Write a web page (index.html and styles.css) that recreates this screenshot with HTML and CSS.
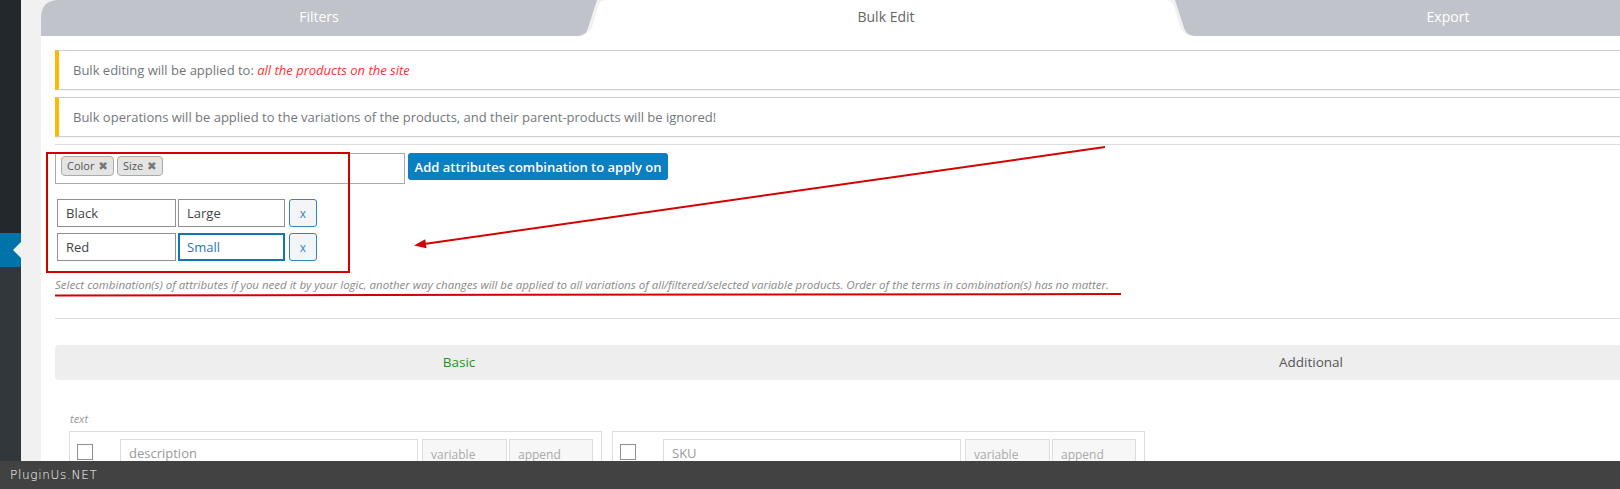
FILE: index.html
```html
<!DOCTYPE html>
<html lang="en">
<head>
  <meta charset="UTF-8">
  <meta name="viewport" content="width=device-width, initial-scale=1.0">
  <title>Bulk Edit</title>
  <link rel="stylesheet" href="styles.css">
</head>
<body>
  <div class="admin">
    <div class="adminmenu">
      <div class="menu-top"></div>
      <div class="menu-current"></div>
      <div class="menu-rest"></div>
    </div>

    <div class="content">
      <div class="tabs">
        <div class="tab tab-filters">Filters</div>
        <div class="tab tab-active">Bulk Edit</div>
        <div class="tab tab-export">Export</div>
      </div>

      <div class="panel">
        <div class="notice">Bulk editing will be applied to: <em class="red">all the products on the site</em></div>
        <div class="notice">Bulk operations will be applied to the variations of the products, and their parent-products will be ignored!</div>
        <div class="sep"></div>

        <div class="attr-row">
          <div class="tag-box">
            <span class="tag">Color <b>✖</b></span>
            <span class="tag">Size <b>✖</b></span>
          </div>
          <button class="btn-add">Add attributes combination to apply on</button>
        </div>

        <div class="combos">
          <div class="combo">
            <input class="term term-1" value="Black">
            <input class="term term-2" value="Large">
            <button class="btn-x">x</button>
          </div>
          <div class="combo">
            <input class="term term-1" value="Red">
            <input class="term term-2 focused" value="Small">
            <button class="btn-x">x</button>
          </div>
        </div>

        <p class="hint">Select combination(s) of attributes if you need it by your logic, another way changes will be applied to all variations of all/filtered/selected variable products. Order of the terms in combination(s) has no matter.</p>
        <div class="sep sep-2"></div>

        <div class="subtabs">
          <div class="subtab active">Basic</div>
          <div class="subtab">Additional</div>
        </div>

        <div class="group-label">text</div>
        <div class="fields">
          <div class="field">
            <span class="check"></span>
            <div class="field-input">description</div>
            <div class="field-sel sel-1">variable</div>
            <div class="field-sel sel-2">append</div>
          </div>
          <div class="field">
            <span class="check"></span>
            <div class="field-input">SKU</div>
            <div class="field-sel sel-1">variable</div>
            <div class="field-sel sel-2">append</div>
          </div>
        </div>
      </div>
    </div>
  </div>

  <!-- red annotation marks drawn over the screen -->
  <svg class="marks" width="1620" height="489" viewBox="0 0 1620 489">
    <rect x="47" y="153" width="302" height="119" fill="none" stroke="#d40000" stroke-width="2"/>
    <line x1="1105" y1="147" x2="424" y2="244" stroke="#d40000" stroke-width="2"/>
    <polygon points="414,245.5 426.5,248.3 425.3,239.3" fill="#d40000"/>
    <line x1="55" y1="295.5" x2="1121" y2="294" stroke="#d40000" stroke-width="2"/>
  </svg>

  <div class="footer-bar">PluginUs.NET</div>
</body>
</html>
```

FILE: styles.css
```css
* {
  box-sizing: border-box;
}

html, body {
  margin: 0;
  padding: 0;
}

body {
  width: 1620px;
  height: 489px;
  overflow: hidden;
  background-color: #f1f1f1;
  font-family: "Open Sans", "Liberation Sans", sans-serif;
  font-size: 13px;
  color: #555;
}

.admin {
  display: flex;
  height: 489px;
}

/* wp admin menu strip */
.adminmenu {
  width: 21px;
  flex: none;
  display: flex;
  flex-direction: column;
}

.menu-top {
  height: 233px;
  background-color: #23282d;
}

.menu-current {
  height: 34px;
  background-color: #0073aa;
  position: relative;
}

.menu-current::after {
  content: "";
  position: absolute;
  right: 0;
  top: 9px;
  border: 8px solid transparent;
  border-left-width: 0;
  border-right-color: #f1f1f1;
}

.menu-rest {
  flex: 1;
  background-color: #32373c;
}

.content {
  width: 1720px;
  flex: none;
  margin-left: 20px;
}

/* top tabs */
.tabs {
  display: flex;
  width: 1680px;
  height: 36px;
}

.tab {
  flex: none;
  height: 36px;
  line-height: 33px;
  text-align: center;
  font-size: 14px;
  color: #fff;
  position: relative;
}

.tab-filters {
  width: 556px;
  background-color: #c0c4ca;
  z-index: 2;
  clip-path: path("M0 36 V18 Q0 0 18 0 H556 L547 28 Q545 36 536 36 Z");
}

.tab-active {
  width: 618px;
  margin: 0 -20px;
  background-color: #fff;
  color: #666;
  z-index: 1;
  clip-path: path("M0 36 C10 36 14 30 16 24 L21 6 Q23 0 30 0 H588 Q595 0 597 6 L602 24 C604 30 608 36 618 36 Z");
}

.tab-export {
  width: 546px;
  background-color: #c0c4ca;
  z-index: 2;
  clip-path: path("M0 0 H546 V36 H20 Q12 36 9 28 Z");
}

.panel {
  background-color: #fff;
  height: 453px;
  padding: 14px 2px 0 14px;
}

/* notices */
.notice {
  height: 40px;
  line-height: 38px;
  border: 1px solid #ccd0d4;
  border-left: 4px solid #ffb900;
  padding: 0 14px;
  color: #72777c;
  box-shadow: 0 1px 1px rgba(0, 0, 0, 0.04);
}

.notice + .notice {
  margin-top: 7px;
}

.red {
  color: #f33;
}

.sep {
  height: 1px;
  background-color: #ddd;
  margin-top: 7px;
}

/* attributes */
.attr-row {
  display: flex;
  align-items: flex-start;
  margin-top: 8px;
}

.tag-box {
  width: 350px;
  height: 31px;
  border: 1px solid #aaa;
  padding: 2px 5px;
  display: flex;
  align-items: flex-start;
  gap: 3px;
}

.tag {
  height: 20px;
  line-height: 18px;
  padding: 0 5px;
  border: 1px solid #aaa;
  border-radius: 4px;
  background-color: #e4e4e4;
  font-size: 11px;
  color: #555;
}

.tag b {
  font-family: "DejaVu Sans", sans-serif;
  font-size: 11.5px;
  color: #777;
  margin-left: 1px;
}

.btn-add {
  margin-left: 3px;
  height: 27px;
  width: 260px;
  padding: 0;
  border: none;
  border-radius: 3px;
  background-color: #0a80c2;
  color: #fff;
  font-family: "Open Sans", "Liberation Sans", sans-serif;
  font-weight: 600;
  font-size: 13px;
}

.combos {
  margin: 15px 0 0 2px;
  display: flex;
  flex-direction: column;
  gap: 6px;
}

.combo {
  display: flex;
  align-items: flex-start;
}

.term {
  height: 28px;
  margin: 0;
  padding: 0 8px;
  border: 1px solid #8c8f94;
  border-radius: 0;
  font-family: "Open Sans", "Liberation Sans", sans-serif;
  font-size: 13px;
  color: #444;
  outline: none;
}

.term-1 {
  width: 119px;
}

.term-2 {
  width: 107px;
  margin-left: 2px;
}

.term.focused {
  border: 2px solid #0e78b6;
  padding: 0 7px;
  color: #1f78b4;
}

.btn-x {
  width: 28px;
  height: 28px;
  margin-left: 4px;
  padding: 0;
  border: 1px solid #2f86c0;
  border-radius: 3px;
  background-color: #f3f5f6;
  color: #2f86c0;
  font-family: "Open Sans", "Liberation Sans", sans-serif;
  font-size: 12px;
}

.hint {
  margin: 16px 0 0;
  font-size: 11.5px;
  line-height: 16px;
  font-style: italic;
  color: #8a8a8a;
  white-space: nowrap;
}

.sep-2 {
  margin-top: 25px;
}

/* basic / additional */
.subtabs {
  margin-top: 26px;
  height: 35px;
  display: grid;
  grid-template-columns: 808px 1fr;
  background-color: #eee;
  border-radius: 4px;
}

.subtab {
  text-align: center;
  line-height: 35px;
  font-size: 13.5px;
  color: #555;
}

.subtab.active {
  color: #1a961a;
}

.group-label {
  margin: 31px 0 0 15px;
  font-size: 11px;
  line-height: 16px;
  font-style: italic;
  color: #999;
}

.fields {
  display: flex;
  gap: 10px;
  margin: 4px 0 0 14px;
}

.field {
  width: 533px;
  height: 60px;
  border: 1px solid #ddd;
  padding: 7px 8px 7px 7px;
  display: flex;
  align-items: flex-start;
}

.check {
  width: 16px;
  height: 16px;
  margin-top: 5px;
  border: 1px solid #8c8f94;
  flex: none;
}

.field-input {
  width: 298px;
  height: 30px;
  margin-left: 27px;
  padding: 0 8px;
  border: 1px solid #ddd;
  line-height: 26px;
  color: #999;
}

.field-sel {
  height: 34px;
  padding: 0 8px;
  border: 1px solid #ddd;
  background-color: #f7f7f7;
  line-height: 30px;
  font-size: 12px;
  color: #aaa;
}

.sel-1 {
  width: 85px;
  margin-left: 4px;
}

.sel-2 {
  width: 84px;
  margin-left: 2px;
}

.marks {
  position: absolute;
  top: 0;
  left: 0;
  pointer-events: none;
}

.footer-bar {
  position: fixed;
  left: 0;
  right: 0;
  bottom: 0;
  height: 28px;
  line-height: 28px;
  padding-left: 10px;
  background-color: #424242;
  color: #fff;
  font-family: "DejaVu Sans", sans-serif;
  font-weight: 200;
  font-size: 12px;
  letter-spacing: 0.7px;
}
```
